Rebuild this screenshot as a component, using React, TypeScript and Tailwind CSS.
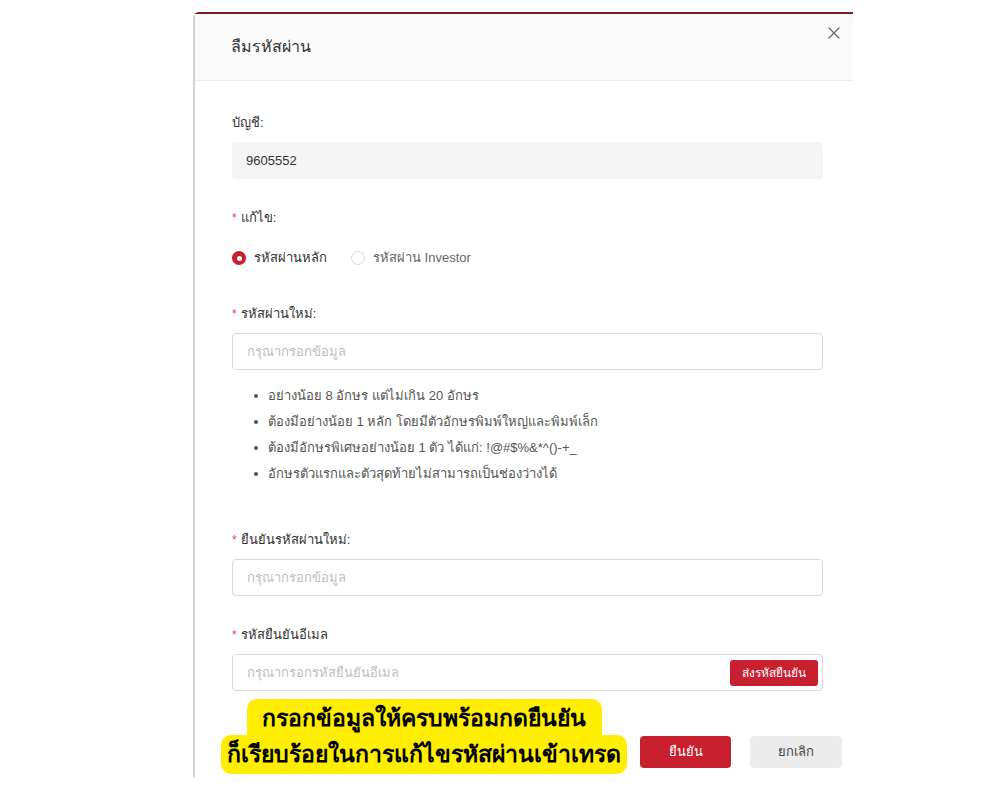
import React from "react";

const font = { fontFamily: '"Liberation Sans", "Noto Sans", Tahoma, sans-serif' };

function Label({ text, required }: { text: string; required?: boolean }) {
  return (
    <div className="h-[20px] flex items-center text-[13px] text-[#333]">
      {required && <span className="text-[#e5484d] mr-[4px] text-[12px]">*</span>}
      {text}
    </div>
  );
}

function Radio({ checked, label }: { checked?: boolean; label: string }) {
  return (
    <div className="flex items-center gap-[8px]">
      {checked ? (
        <span className="w-[14px] h-[14px] rounded-full bg-[#c8202f] flex items-center justify-center">
          <span className="w-[5px] h-[5px] rounded-full bg-white" />
        </span>
      ) : (
        <span className="w-[14px] h-[14px] rounded-full border border-[#dcdcdc] bg-white" />
      )}
      <span className={checked ? "text-[13px] text-[#333]" : "text-[13px] text-[#666]"}>{label}</span>
    </div>
  );
}

function TextInput({ placeholder, children }: { placeholder: string; children?: React.ReactNode }) {
  return (
    <div className="w-[591px] h-[37px] rounded-[4px] border border-[#d9d9de] bg-white flex items-center justify-between pl-[14px] pr-[4px]">
      <span className="text-[13px] text-[#bdbdc4]">{placeholder}</span>
      {children}
    </div>
  );
}

const rules = [
  "อย่างน้อย 8 อักษร แต่ไม่เกิน 20 อักษร",
  "ต้องมีอย่างน้อย 1 หลัก โดยมีตัวอักษรพิมพ์ใหญ่และพิมพ์เล็ก",
  "ต้องมีอักษรพิเศษอย่างน้อย 1 ตัว ได้แก่: !@#$%&*^()-+_",
  "อักษรตัวแรกและตัวสุดท้ายไม่สามารถเป็นช่องว่างได้",
];

export default function App() {
  return (
    <div className="relative w-[1000px] h-[800px] bg-white overflow-hidden" style={font}>
      <div className="ml-[193px] mt-[12px] w-[660px] h-[765px] border-l-2 border-t-2 border-l-[#d2d2d2] border-t-[#7c1c1c] rounded-tl-[6px] flex flex-col">
        {/* header */}
        <div className="h-[67px] bg-[#fafafa] border-b border-[#ececec] flex justify-between pl-[36px]">
          <div className="self-center text-[16px] text-[#333]">ลืมรหัสผ่าน</div>
          <svg className="mt-[13px] mr-[13px]" width="12" height="12" viewBox="0 0 12 12" fill="none">
            <path d="M1 1 L11 11 M11 1 L1 11" stroke="#666" strokeWidth="1.2" strokeLinecap="round" />
          </svg>
        </div>

        {/* body */}
        <div className="pl-[37px] flex flex-col">
          <div className="mt-[32px]">
            <Label text="บัญชี:" />
          </div>
          <div className="mt-[9px] w-[591px] h-[37px] rounded-[4px] bg-[#f5f5f5] flex items-center pl-[14px] text-[13px] text-[#333]">
            9605552
          </div>

          <div className="mt-[29px]">
            <Label text="แก้ไข:" required />
          </div>
          <div className="mt-[21px] h-[18px] flex items-center gap-[24px]">
            <Radio checked label="รหัสผ่านหลัก" />
            <Radio label="รหัสผ่าน Investor" />
          </div>

          <div className="mt-[37px]">
            <Label text="รหัสผ่านใหม่:" required />
          </div>
          <div className="mt-[9px]">
            <TextInput placeholder="กรุณากรอกข้อมูล" />
          </div>
          <ul className="mt-[13px] pl-[22px] flex flex-col">
            {rules.map((r) => (
              <li key={r} className="h-[26px] flex items-center text-[13px] text-[#555]">
                <span className="w-[4px] h-[4px] rounded-full bg-[#555] mr-[10px]" />
                {r}
              </li>
            ))}
          </ul>

          <div className="mt-[43px]">
            <Label text="ยืนยันรหัสผ่านใหม่:" required />
          </div>
          <div className="mt-[9px]">
            <TextInput placeholder="กรุณากรอกข้อมูล" />
          </div>

          <div className="mt-[29px]">
            <Label text="รหัสยืนยันอีเมล" required />
          </div>
          <div className="mt-[9px]">
            <TextInput placeholder="กรุณากรอกรหัสยืนยันอีเมล">
              <button className="h-[26px] w-[88px] rounded-[3px] bg-[#c8202f] text-white text-[12px]">
                ส่งรหัสยืนยัน
              </button>
            </TextInput>
          </div>

          <div className="mt-[45px] flex justify-end gap-[19px] pr-[11px]">
            <button className="w-[91px] h-[32px] rounded-[4px] bg-[#c8202f] text-white text-[13px]">ยืนยัน</button>
            <button className="w-[92px] h-[32px] rounded-[4px] bg-[#ececec] text-[#444] text-[13px]">ยกเลิก</button>
          </div>
        </div>
      </div>

      {/* yellow annotation */}
      <div className="absolute left-[221px] top-[699px] w-[406px] flex flex-col items-center">
        <div className="w-[355px] h-[38px] bg-[#ffee00] rounded-t-[10px] flex items-center justify-center text-[23px] font-bold text-black leading-none">
          กรอกข้อมูลให้ครบพร้อมกดยืนยัน
        </div>
        <div className="w-[406px] h-[39px] -mt-[2px] bg-[#ffee00] rounded-[10px] flex items-center justify-center text-[23px] font-bold text-black leading-none">
          ก็เรียบร้อยในการแก้ไขรหัสผ่านเข้าเทรด
        </div>
      </div>
    </div>
  );
}
